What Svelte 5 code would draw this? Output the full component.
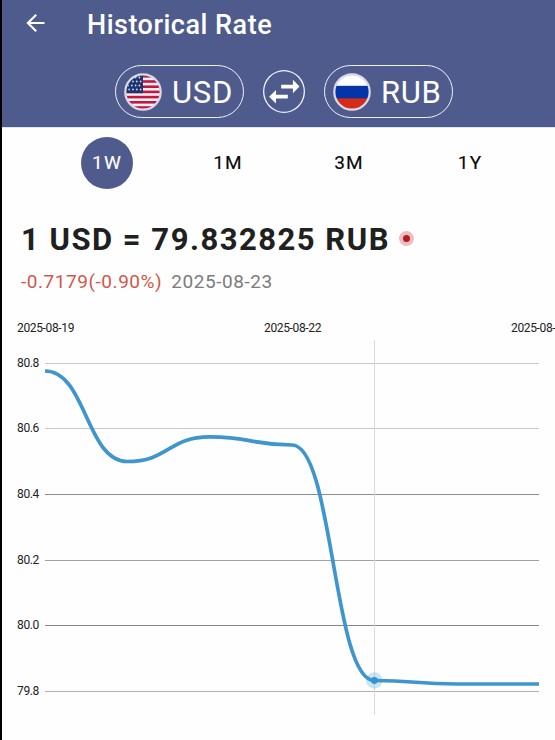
<script>
  const ranges = ["1W", "1M", "3M", "1Y"];
  let selected = "1W";

  const points = [
    [45, 371],
    [127.3, 461.5],
    [209.7, 436.8],
    [292, 445],
    [374.3, 680.5],
    [456.7, 684],
    [539, 684],
  ];
  const active = points[4];

  const gridLines = [
    { label: "80.8", y: 363.5, color: "#c6c8c7" },
    { label: "80.6", y: 428.5, color: "#c6c8c7" },
    { label: "80.4", y: 494.5, color: "#8c8e8d" },
    { label: "80.2", y: 560.5, color: "#a2a4a3" },
    { label: "80.0", y: 625.5, color: "#868887" },
    { label: "79.8", y: 691.5, color: "#b0b2b1" },
  ];

  const dates = [
    { label: "2025-08-19", x: 17 },
    { label: "2025-08-22", x: 264 },
    { label: "2025-08-25", x: 511 },
  ];

  function smoothPath(pts) {
    let d = `M${pts[0][0]} ${pts[0][1]}`;
    for (let i = 1; i < pts.length; i++) {
      const [x0, y0] = pts[i - 1];
      const [x1, y1] = pts[i];
      const mid = (x0 + x1) / 2;
      d += ` C${mid} ${y0} ${mid} ${y1} ${x1} ${y1}`;
    }
    return d;
  }

  const stars = [];
  for (let row = 0; row < 4; row++) {
    for (let col = 0; col < 4; col++) {
      stars.push([4 + col * 3.8 + (row % 2) * 1.2, 4.5 + row * 4]);
    }
  }
</script>

<div class="screen">
  <header>
    <div class="title-bar">
      <button class="back" aria-label="Back">
        <svg width="20" height="20" viewBox="0 0 20 20">
          <path d="M19.5 10H3M11.2 1.7L2.9 10l8.3 8.3" fill="none" stroke="#fff" stroke-width="2.2" />
        </svg>
      </button>
      <h1>Historical Rate</h1>
    </div>
    <div class="pair">
      <button class="currency">
        <svg class="flag" width="38" height="38" viewBox="0 0 38 38">
          <clipPath id="us"><circle cx="19" cy="19" r="17" /></clipPath>
          <g clip-path="url(#us)">
            <rect width="38" height="38" fill="#f4f1f6" />
            {#each [2, 7.2, 12.4, 17.6, 22.8, 28, 33.2] as y}
              <rect x="0" {y} width="38" height="2.6" fill="#c0183f" />
            {/each}
            <rect width="19" height="20.2" fill="#1d3473" />
            {#each stars as [x, y]}
              <circle cx={x} cy={y} r="0.9" fill="#c9d9ee" />
            {/each}
          </g>
          <circle cx="19" cy="19" r="17.7" fill="none" stroke="#dcd9e7" stroke-width="2.2" />
        </svg>
        <span>USD</span>
      </button>
      <button class="swap" aria-label="Swap currencies">
        <svg width="42" height="43" viewBox="0 0 42 43">
          <path d="M18.2 14.7h11.7v-5l6.6 6.8-6.6 6.8v-4.8H18.2z M24.8 24.8H13V20l-6.9 6.8 6.9 6.8v-5h11.8z" fill="#fff" />
        </svg>
      </button>
      <button class="currency">
        <svg class="flag" width="38" height="38" viewBox="0 0 38 38">
          <clipPath id="ru"><circle cx="19" cy="19" r="17" /></clipPath>
          <g clip-path="url(#ru)">
            <rect width="38" height="13" fill="#fff" />
            <rect y="12.8" width="38" height="13" fill="#0434a8" />
            <rect y="25.5" width="38" height="13" fill="#d62b16" />
          </g>
          <circle cx="19" cy="19" r="17.7" fill="none" stroke="#dcd9e7" stroke-width="2.2" />
        </svg>
        <span>RUB</span>
      </button>
    </div>
  </header>

  <nav>
    {#each ranges as range}
      <button class="range" class:selected={selected === range} on:click={() => (selected = range)}>
        {range}
      </button>
    {/each}
  </nav>

  <section class="summary">
    <div class="rate">
      <strong>1 USD = 79.832825 RUB</strong>
      <i class="live"></i>
    </div>
    <div class="detail">
      <span class="change">-0.7179(-0.90%)</span>
      <span class="date">2025-08-23</span>
    </div>
  </section>

  <svg class="chart" width="553" height="440" viewBox="2 300 553 440">
    {#each dates as date}
      <text x={date.x} y="332">{date.label}</text>
    {/each}
    {#each gridLines as line}
      <text x="17" y={line.y + 3.5}>{line.label}</text>
      <line x1="45" x2="539" y1={line.y} y2={line.y} stroke={line.color} />
    {/each}
    <line x1="374.5" x2="374.5" y1="340" y2="715" stroke="#dadada" />
    <circle cx={active[0]} cy={active[1]} r="8.2" fill="#3b97d3" fill-opacity="0.25" />
    <path d={smoothPath(points)} fill="none" stroke="#3f95cd" stroke-width="3.7" />
    <circle cx={active[0]} cy={active[1]} r="3.4" fill="#3293d6" />
  </svg>
</div>

<style>
  :global(body) {
    margin: 0;
    background: #fff;
  }

  .screen {
    box-sizing: border-box;
    width: 555px;
    height: 740px;
    overflow: hidden;
    border-left: 2px solid #000;
    background: #fefefe;
    font-family: Roboto, "Liberation Sans", sans-serif;
  }

  button {
    box-sizing: border-box;
    padding: 0;
    border: 0;
    background: none;
    color: inherit;
    font-family: inherit;
  }

  header {
    box-sizing: border-box;
    height: 127px;
    background: #4f5b8d;
    color: #fff;
  }

  .title-bar {
    display: flex;
    align-items: center;
    height: 49px;
    padding-left: 23px;
  }

  .back {
    width: 20px;
    height: 20px;
    margin-top: -3px;
  }

  .back svg,
  .swap svg,
  .chart {
    display: block;
  }

  h1 {
    margin: 0 0 0 42px;
    font-size: 27px;
    font-weight: 500;
    letter-spacing: 0.5px;
    white-space: nowrap;
  }

  .pair {
    display: flex;
    align-items: center;
    gap: 19px;
    margin-top: 16px;
    padding-left: 113px;
  }

  .currency {
    display: flex;
    align-items: center;
    width: 129px;
    height: 53px;
    padding-left: 8px;
    border: 1.5px solid #f0f2fc;
    border-radius: 27px;
    font-size: 31px;
    letter-spacing: 0.7px;
  }

  .currency span {
    margin-top: 1px;
  }

  .flag {
    flex-shrink: 0;
    margin-right: 10px;
  }

  .swap {
    width: 42px;
    height: 43px;
    border-radius: 50%;
    box-shadow: inset 0 0 0 1.3px #f0f2fc;
  }

  nav {
    display: flex;
    justify-content: space-between;
    padding: 9px 59px 0 79px;
    border-top: 1px solid #dfe3f4;
  }

  .range {
    width: 52px;
    height: 52px;
    padding-bottom: 2px;
    border-radius: 50%;
    color: #0a0a0a;
    font-size: 19px;
    font-weight: 400;
    letter-spacing: 1.2px;
    -webkit-text-stroke: 0.15px currentColor;
  }

  .selected {
    background: #4f5b8d;
    color: #fff;
  }

  .summary {
    height: 111px;
    box-sizing: border-box;
    padding: 31px 0 0 19px;
    white-space: nowrap;
  }

  .rate {
    display: flex;
    align-items: center;
    height: 38px;
    color: #202020;
    font-size: 31px;
  }

  .rate strong {
    font-weight: 700;
    letter-spacing: 1.5px;
  }

  .live {
    box-sizing: border-box;
    width: 15px;
    height: 15px;
    margin: -2px 0 0 9px;
    border: 4.5px solid #edbdc0;
    border-radius: 50%;
    background: #b01c24;
  }

  .detail {
    display: flex;
    gap: 9px;
    margin-top: 12px;
    font-size: 19px;
    line-height: 24px;
    letter-spacing: 0.55px;
  }

  .change {
    color: #d2574c;
  }

  .date {
    color: #7c7c7c;
  }

  .chart text {
    fill: #222;
    font-size: 12px;
    letter-spacing: -0.35px;
  }
</style>
